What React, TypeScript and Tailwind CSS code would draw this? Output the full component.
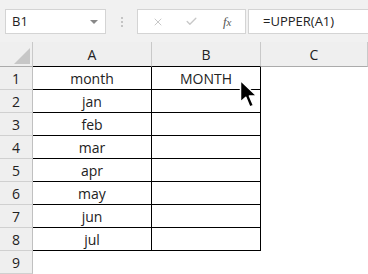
import { X, Check } from "lucide-react";

const months = ["month", "jan", "feb", "mar", "apr", "may", "jun", "jul"];

function Cursor() {
  return (
    <svg
      className="absolute left-[239px] top-[79px]"
      width="22"
      height="31"
      viewBox="0 0 22 31"
    >
      <path
        d="M1.5 1.5 L1.5 23 L6.8 18.2 L10.8 28 L14.5 26.4 L10.4 17 L17.8 17 Z"
        fill="#000"
        stroke="#fff"
        strokeWidth="1.5"
        strokeLinejoin="round"
      />
    </svg>
  );
}

export default function App() {
  const font = "font-['Open_Sans',sans-serif]";
  return (
    <div className={`relative w-[368px] h-[274px] overflow-hidden bg-white ${font}`}>
      {/* formula bar */}
      <div className="h-[42px] bg-[#f1f1f1] flex items-start pt-[9px] pl-[5px]">
        <div className="w-[101px] h-[25px] bg-white border border-[#d4d4d4] flex items-center justify-between pl-[6px] pr-[7px]">
          <span className="text-[13px] text-[#222]">B1</span>
          <span className="w-0 h-0 border-l-[4px] border-r-[4px] border-t-[4px] border-l-transparent border-r-transparent border-t-[#888]" />
        </div>
        <div className="w-[31px] h-[25px] flex flex-col items-center justify-center gap-[2px]">
          <span className="w-[2px] h-[2px] bg-[#c4c4c4]" />
          <span className="w-[2px] h-[2px] bg-[#c4c4c4]" />
          <span className="w-[2px] h-[2px] bg-[#c4c4c4]" />
        </div>
        <div className="w-[109px] h-[25px] bg-white border border-[#d4d4d4] flex items-center">
          <div className="w-[36px] flex justify-center pl-[4px]">
            <X className="w-[12px] h-[12px] text-[#c8c8c8]" strokeWidth={2} />
          </div>
          <div className="w-[36px] flex justify-center">
            <Check className="w-[13px] h-[13px] text-[#c8c8c8]" strokeWidth={2.5} />
          </div>
          <div className="w-[36px] flex justify-center">
            <span className="font-['Liberation_Serif',serif] italic text-[13px] text-[#555]">
              f<span className="text-[11px]">x</span>
            </span>
          </div>
        </div>
        <div className="ml-[2px] flex-1 h-[25px] bg-white border-y border-l border-[#d4d4d4] flex items-center pl-[14px]">
          <span className="text-[13px] text-[#222]">=UPPER(A1)</span>
        </div>
      </div>

      {/* grid */}
      <div className="grid grid-cols-[33px_119px_109px_107px] grid-rows-[25px_repeat(9,23px)] text-[14px] text-[#222]">
        <div className="bg-[#efefef] border-r border-b border-[#c9c9c9] border-b-[#ababab] relative">
          <svg className="absolute right-[1px] bottom-[2px]" width="18" height="16">
            <polygon points="17,0 17,16 1,16" fill="#c7c7c7" />
          </svg>
        </div>
        {["A", "B", "C"].map((c) => (
          <div
            key={c}
            className={`bg-[#efefef] border-r border-b border-[#c9c9c9] flex items-center justify-center text-[#222] ${
              c === "C" ? "border-b-[#ababab]" : "border-b-black"
            }`}
          >
            {c}
          </div>
        ))}
        {Array.from({ length: 9 }).map((_, i) => {
          const inTable = i < 8;
          return [
            <div
              key={`h${i}`}
              className="bg-[#efefef] border-r border-b border-[#d0d0d0] border-r-[#c0c0c0] flex items-center justify-center"
            >
              {i + 1}
            </div>,
            <div
              key={`a${i}`}
              className={
                inTable
                  ? "border-r border-b border-black flex items-center justify-center"
                  : ""
              }
            >
              {inTable ? months[i] : ""}
            </div>,
            <div
              key={`b${i}`}
              className={
                inTable
                  ? "border-r border-b border-black flex items-center justify-center"
                  : ""
              }
            >
              {i === 0 ? "MONTH" : ""}
            </div>,
            <div key={`c${i}`} />,
          ];
        })}
      </div>

      <Cursor />
    </div>
  );
}
